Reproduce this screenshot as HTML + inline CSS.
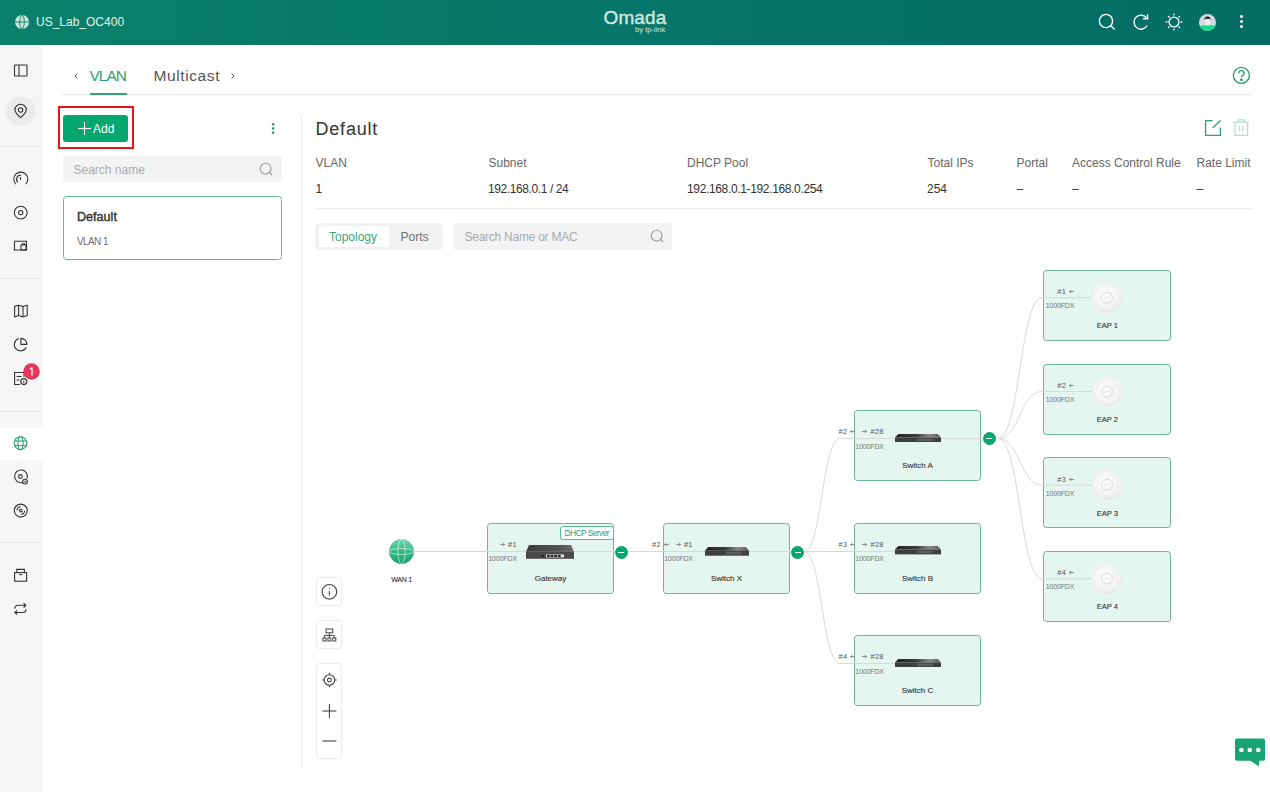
<!DOCTYPE html>
<html><head><meta charset="utf-8">
<style>
*{margin:0;padding:0;box-sizing:border-box}
html,body{width:1270px;height:792px;overflow:hidden;background:#fff;font-family:"Liberation Sans",sans-serif;color:#333}
.a{position:absolute}
.t{position:absolute;white-space:nowrap;line-height:1}
#hdr{left:0;top:0;width:1270px;height:45px;background:linear-gradient(90deg,#0a806b 0%,#077b68 25%,#05736a 60%,#036d64 100%)}
#side{left:0;top:45px;width:42px;height:747px;background:#f6f6f6;box-shadow:1px 0 0 #f9f9f9}
.hr{position:absolute;height:1px;background:#e6e6e6}
.vr{position:absolute;width:1px;background:#e9e9e9}
.box{position:absolute;width:127px;height:71px;border:1px solid #6db49a;border-radius:3.5px;background:#e5f5ef}
.lbl{position:absolute;white-space:nowrap;line-height:1;font-size:8px;color:#222;text-align:center;-webkit-text-stroke:0.1px #222}
.port{position:absolute;white-space:nowrap;line-height:1;font-size:7.4px;color:#666}
.port i{font-style:normal}
.dot{position:absolute;width:13px;height:13px;border-radius:50%;background:#04a76e}
.dot:after{content:"";position:absolute;left:3.5px;top:6px;width:6px;height:1.2px;background:#fff}
.ar{display:inline-block;vertical-align:0px;fill:none;stroke:#666;stroke-width:0.7;position:static!important}
#topo .box{z-index:1}
#topo svg,#topo div{z-index:3}
#topo .box{z-index:1}
#topo svg.lines{z-index:2}
.tb{position:absolute;left:316px;width:26px;background:#fff;border:1px solid #ededed;border-radius:4px;box-shadow:0 0 2px rgba(0,0,0,.04)}
</style></head><body>

<!-- HEADER -->
<div id="hdr" class="a">
  <svg class="a" style="left:15px;top:15px" width="14" height="14" viewBox="0 0 14 14">
    <circle cx="7" cy="7" r="7" fill="#c9e6dc"/>
    <ellipse cx="7" cy="7" rx="2.3" ry="6.8" fill="none" stroke="#0a806b" stroke-width="0.9"/>
    <line x1="0" y1="7" x2="14" y2="7" stroke="#0a806b" stroke-width="0.9"/>
  </svg>
  <div class="t" style="left:36px;top:16px;font-size:12px;color:#e6f3ee">US_Lab_OC400</div>
  <!-- logo -->
  <div class="t" style="left:603.5px;top:8.2px;font-size:19px;color:#cfe7df;letter-spacing:0.1px;-webkit-text-stroke:0.45px #cfe7df">Omada</div>
  <div class="t" style="left:635px;top:26px;font-size:7.6px;color:#d2e9e1">by tp-link</div>
  <!-- search -->
  <svg class="a" style="left:1096px;top:11px" width="22" height="22" viewBox="0 0 22 22" fill="none" stroke="#fff" stroke-width="1.4">
    <circle cx="10" cy="10" r="6.6"/><line x1="14.8" y1="14.8" x2="18.6" y2="18.6"/>
  </svg>
  <!-- refresh -->
  <svg class="a" style="left:1129.5px;top:10.5px" width="22" height="22" viewBox="0 0 22 22" fill="none" stroke="#fff" stroke-width="1.4">
    <path d="M16.8 7.2 A7 7 0 1 0 17.2 14.5"/><path d="M17.6 3.2 L17.6 7.8 L13 7.8" stroke-linejoin="miter"/>
  </svg>
  <!-- sun -->
  <svg class="a" style="left:1163px;top:10.5px" width="22" height="22" viewBox="0 0 22 22" fill="none" stroke="#fff" stroke-width="1.4">
    <circle cx="11" cy="11" r="4.9"/>
    <g stroke-linecap="round" stroke-width="1.5"><line x1="18.20" y1="11.00" x2="18.80" y2="11.00"/><line x1="16.09" y1="16.09" x2="16.52" y2="16.52"/><line x1="11.00" y1="18.20" x2="11.00" y2="18.80"/><line x1="5.91" y1="16.09" x2="5.48" y2="16.52"/><line x1="3.80" y1="11.00" x2="3.20" y2="11.00"/><line x1="5.91" y1="5.91" x2="5.48" y2="5.48"/><line x1="11.00" y1="3.80" x2="11.00" y2="3.20"/><line x1="16.09" y1="5.91" x2="16.52" y2="5.48"/></g>
  </svg>
  <!-- avatar -->
  <svg class="a" style="left:1199px;top:13.5px" width="17" height="17" viewBox="0 0 17 17">
    <defs><clipPath id="av"><circle cx="8.5" cy="8.5" r="8.5"/></clipPath></defs>
    <g clip-path="url(#av)">
      <rect width="17" height="17" fill="#d4dbe0"/>
      <rect x="6.3" y="8" width="4.4" height="6" fill="#efe6e6"/>
      <path d="M0 12.6 Q4 10.4 8.5 11.6 Q13 10.4 17 12.6 L17 17 L0 17Z" fill="#14dc8a"/>
      <ellipse cx="8.5" cy="7.2" rx="2.6" ry="3.2" fill="#f4eeee"/>
      <path d="M5.4 6.8 Q5.2 2.4 8.5 2.6 Q11.8 2.4 11.6 6.8 Q11 4.8 10.2 4.8 Q8.5 5.4 6.8 4.8 Q6 4.8 5.4 6.8Z" fill="#1f2a2a"/>
    </g>
  </svg>
  <!-- kebab -->
  <div class="a" style="left:1239.8px;top:15.3px;width:3px;height:3px;border-radius:50%;background:#fff"></div>
  <div class="a" style="left:1239.8px;top:20.2px;width:3px;height:3px;border-radius:50%;background:#fff"></div>
  <div class="a" style="left:1239.8px;top:25.2px;width:3px;height:3px;border-radius:50%;background:#fff"></div>
</div>

<!-- SIDEBAR -->
<div id="side" class="a"></div>
<div id="sideicons">
<svg class="a" style="left:0;top:45px" width="42" height="747" viewBox="0 45 42 747" fill="none" stroke="#333" stroke-width="1.1">
  <!-- layout -->
  <rect x="14.5" y="65" width="12.5" height="11" rx="0.5"/>
  <line x1="19" y1="65" x2="19" y2="76"/>
  <!-- location bg -->
  <circle cx="20.5" cy="111" r="14.8" fill="#ebebeb" stroke="none"/>
  <path d="M20.6 117.7 C17.3 114.8 14.9 112.4 14.9 110 A5.7 5.7 0 0 1 26.3 110 C26.3 112.4 23.9 114.8 20.6 117.7Z"/>
  <circle cx="20.6" cy="110" r="2.2"/>
  <!-- dashboard gauge -->
  <path d="M15.9 184.1 A7 7 0 1 1 25.7 184.1"/>
  <path d="M17.8 182.3 A4.2 4.2 0 0 1 20.8 175.1"/>
  <line x1="20.5" y1="177" x2="20.5" y2="179.7"/>
  <!-- target -->
  <circle cx="20.7" cy="212.6" r="6.4"/>
  <circle cx="20.7" cy="212.6" r="2.1"/>
  <!-- devices -->
  <path d="M14.5 249.8 L14.5 241.2 L26.5 241.2 L26.5 250 L13.5 250"/>
  <rect x="21" y="245" width="5" height="5"/>
  <path d="M22.4 245 L22.4 243.8 L24.6 243.8 L24.6 245"/>
  <!-- map -->
  <path d="M14.6 306.4 L18.6 305.2 L23 306.6 L27.2 305.2 L27.2 315.6 L23 317 L18.6 315.6 L14.6 317 Z" stroke-linejoin="round"/>
  <line x1="18.6" y1="305.2" x2="18.6" y2="315.6"/><line x1="23" y1="306.6" x2="23" y2="317"/>
  <!-- pie -->
  <path d="M18.9 338.5 A6.3 6.3 0 1 0 26.3 347.3"/>
  <path d="M20.9 338.4 L20.9 344.4 L26.9 344.4 A6 6 0 0 0 20.9 338.4 Z"/>
  <!-- log -->
  <path d="M24 377 L24 372.5 L14.6 372.5 L14.6 384.5 L20 384.5"/>
  <line x1="16.6" y1="376.5" x2="21.5" y2="376.5"/><line x1="16.6" y1="380" x2="19.5" y2="380"/>
  <circle cx="23.8" cy="381.6" r="3"/>
  <line x1="23.8" y1="380.8" x2="23.8" y2="383.2"/>
  <!-- selected bg -->
  <rect x="0" y="428" width="42" height="32" fill="#fff" stroke="none"/>
  <g stroke="#2e9e74">
  <circle cx="20.5" cy="443.2" r="6.4"/>
  <ellipse cx="20.5" cy="443.2" rx="2.6" ry="6.4"/>
  <line x1="14.4" y1="441" x2="26.6" y2="441"/><line x1="14.4" y1="445.6" x2="26.6" y2="445.6"/>
  </g>
  <!-- icon 477 -->
  <path d="M22.4 482.6 A6.4 6.4 0 1 1 27 478.6"/>
  <circle cx="20.4" cy="476.5" r="1.9"/>
  <circle cx="25" cy="481.6" r="2.4"/>
  <path d="M24 480.6 L26 482.6 M26 480.6 L24 482.6" stroke-width="0.8"/>
  <!-- disc 510 -->
  <circle cx="20.8" cy="510.6" r="6.5"/>
  <circle cx="20.8" cy="510.6" r="1.3"/>
  <path d="M17 510.4 A3.8 3.8 0 0 1 20.6 506.8"/><path d="M24.6 510.8 A3.8 3.8 0 0 1 21 514.4"/>
  <!-- box -->
  <rect x="14.6" y="572.6" width="12" height="8.6"/>
  <path d="M16.8 572.6 L16.8 569.4 L24.4 569.4 L24.4 572.6"/>
  <line x1="19.2" y1="574.6" x2="22.2" y2="574.6"/>
  <!-- repeat -->
  <path d="M14.8 608.8 Q14.8 605.3 18.2 605.3 L25.8 605.3 M23.6 603.1 L25.8 605.3 L23.6 607.5"/>
  <path d="M26 609.2 Q26 612.5 22.6 612.5 L14.9 612.5 M17.1 610.3 L14.9 612.5 L17.1 614.7"/>
</svg>
<div class="hr" style="left:0;top:146px;width:42px;background:#e8e8e8"></div>
<div class="hr" style="left:0;top:278px;width:42px;background:#e8e8e8"></div>
<div class="hr" style="left:0;top:411px;width:42px;background:#e8e8e8"></div>
<div class="hr" style="left:0;top:542px;width:42px;background:#e8e8e8"></div>
<svg class="a" style="left:23px;top:363px" width="17" height="17" viewBox="0 0 17 17"><circle cx="8.5" cy="8.5" r="8.3" fill="#e8355d"/><path d="M7 6.2 L9 4.6 L9 12.4" fill="none" stroke="#fff" stroke-width="1.3" stroke-linejoin="round"/></svg>
</div>

<!-- MAIN -->
<div id="main">
<!-- tabs -->
<svg class="a" style="left:72px;top:71px" width="8" height="10" viewBox="0 0 8 10" fill="none" stroke="#555" stroke-width="1"><path d="M5.5 2.5 L3 5 L5.5 7.5"/></svg>
<div class="t" style="left:89.5px;top:67.5px;font-size:15.5px;color:#2e9e74;letter-spacing:-1px">VLAN</div>
<div class="a" style="left:90px;top:93px;width:37px;height:2px;background:#2ea57a"></div>
<div class="t" style="left:153.5px;top:68px;font-size:15.5px;color:#555;letter-spacing:0.6px">Multicast</div>
<svg class="a" style="left:229px;top:71px" width="8" height="10" viewBox="0 0 8 10" fill="none" stroke="#555" stroke-width="1"><path d="M2.5 2.5 L5 5 L2.5 7.5"/></svg>
<div class="hr" style="left:62px;top:94px;width:1190px;background:#e8e8e8"></div>
<div class="a" style="left:90px;top:93px;width:37px;height:2px;background:#2ea57a"></div>
<svg class="a" style="left:1231px;top:65px" width="21" height="21" viewBox="0 0 21 21" fill="none" stroke="#2e9e74" stroke-width="1.4">
  <circle cx="10.4" cy="10.4" r="8"/>
  <path d="M7.8 8.2 A2.6 2.6 0 1 1 11.6 10.5 C10.8 11 10.4 11.6 10.4 12.6"/>
  <circle cx="10.4" cy="14.8" r="0.7" fill="#2e9e74"/>
</svg>

<!-- left panel -->
<div class="a" style="left:58px;top:106px;width:76px;height:43px;border:2px solid #e8141c"></div>
<div class="a" style="left:63px;top:115px;width:65px;height:27px;border-radius:3px;background:#04a76e"></div>
<svg class="a" style="left:78px;top:122px" width="13" height="13" viewBox="0 0 13 13" stroke="#fff" stroke-width="1.2"><line x1="6.5" y1="0" x2="6.5" y2="13"/><line x1="0" y1="6.5" x2="13" y2="6.5"/></svg>
<div class="t" style="left:93px;top:122.7px;font-size:12px;color:#fff">Add</div>
<svg class="a" style="left:268px;top:119px" width="10" height="18" viewBox="0 0 10 18" fill="#2b9270"><circle cx="5.1" cy="5.2" r="1.25"/><circle cx="5.1" cy="9.5" r="1.25"/><circle cx="5.1" cy="13.7" r="1.25"/></svg>

<div class="a" style="left:63px;top:156px;width:219px;height:26px;border-radius:3px;background:#f3f3f3"></div>
<div class="t" style="left:73.5px;top:163.5px;font-size:12px;color:#aaa">Search name</div>
<svg class="a" style="left:259px;top:162px" width="15" height="15" viewBox="0 0 15 15" fill="none" stroke="#999" stroke-width="1.1"><circle cx="6.6" cy="6.6" r="5.4"/><line x1="10.5" y1="10.5" x2="13.2" y2="13.2"/></svg>

<div class="a" style="left:63px;top:196px;width:219px;height:64px;border:1px solid #66b399;border-radius:3.5px;background:#fff"></div>
<div class="t" style="left:77px;top:211.3px;font-size:12.6px;color:#333;-webkit-text-stroke:0.4px #333">Default</div>
<div class="t" style="left:77px;top:236.9px;font-size:10px;color:#707070;letter-spacing:-0.6px">VLAN 1</div>

<div class="vr" style="left:301px;top:115px;height:652px"></div>

<!-- right header -->
<div class="t" style="left:315.5px;top:119.5px;font-size:18px;color:#333;letter-spacing:0.8px">Default</div>
<svg class="a" style="left:1203px;top:118px" width="20" height="20" viewBox="0 0 20 20" fill="none" stroke="#2e9e74" stroke-width="1.3">
  <path d="M9.6 2.6 L2.6 2.6 L2.6 17.4 L17.4 17.4 L17.4 9.6"/><line x1="9.6" y1="10" x2="17.6" y2="2.6"/>
</svg>
<svg class="a" style="left:1231px;top:117px" width="20" height="20" viewBox="0 0 20 20" fill="none" stroke="#b5dccd" stroke-width="1.2">
  <line x1="2" y1="5.2" x2="18" y2="5.2"/><path d="M7.2 5 L7.2 2.8 L13.4 2.8 L13.4 5"/>
  <path d="M4 5.2 L4 18.4 L16.6 18.4 L16.6 5.2"/><line x1="8.6" y1="9" x2="8.6" y2="14"/><line x1="11.8" y1="9" x2="11.8" y2="14"/>
</svg>

<div class="t" style="left:315.5px;top:156.5px;font-size:12px;color:#666">VLAN</div>
<div class="t" style="left:488.5px;top:156.5px;font-size:12px;color:#666">Subnet</div>
<div class="t" style="left:687px;top:156.5px;font-size:12px;color:#666">DHCP Pool</div>
<div class="t" style="left:927.5px;top:156.5px;font-size:12px;color:#666">Total IPs</div>
<div class="t" style="left:1016.5px;top:156.5px;font-size:12px;color:#666">Portal</div>
<div class="t" style="left:1072px;top:156.5px;font-size:12px;color:#666">Access Control Rule</div>
<div class="t" style="left:1196.5px;top:156.5px;font-size:12px;color:#666">Rate Limit</div>

<div class="t" style="left:315.5px;top:182.5px;font-size:12px;color:#333">1</div>
<div class="t" style="left:488px;top:182.5px;font-size:12px;color:#333;letter-spacing:-0.4px">192.168.0.1 / 24</div>
<div class="t" style="left:687px;top:182.5px;font-size:12px;color:#333;letter-spacing:-0.35px">192.168.0.1-192.168.0.254</div>
<div class="t" style="left:927px;top:182.5px;font-size:12px;color:#333">254</div>
<div class="t" style="left:1016.5px;top:182.5px;font-size:12px;color:#333">–</div>
<div class="t" style="left:1072px;top:182.5px;font-size:12px;color:#333">–</div>
<div class="t" style="left:1196.5px;top:182.5px;font-size:12px;color:#333">–</div>
<div class="hr" style="left:315px;top:208px;width:937px;background:#ececec"></div>

<!-- seg tabs -->
<div class="a" style="left:315px;top:223px;width:128px;height:27px;border-radius:4px;background:#f2f2f2"></div>
<div class="a" style="left:319px;top:226px;width:70px;height:21px;border-radius:3px;background:#fff"></div>
<div class="t" style="left:329px;top:230.5px;font-size:12px;color:#3aa67c">Topology</div>
<div class="t" style="left:400.5px;top:230.5px;font-size:12px;color:#707070">Ports</div>
<div class="a" style="left:453px;top:223px;width:219px;height:27px;border-radius:4px;background:#f3f3f3"></div>
<div class="t" style="left:464.5px;top:230.5px;font-size:12px;color:#aaa;letter-spacing:-0.25px">Search Name or MAC</div>
<svg class="a" style="left:650px;top:229px" width="15" height="15" viewBox="0 0 15 15" fill="none" stroke="#999" stroke-width="1.1"><circle cx="6.6" cy="6.6" r="5.4"/><line x1="10.5" y1="10.5" x2="13.2" y2="13.2"/></svg>

<div id="topo">
<svg class="a" style="left:0;top:0" width="1270" height="792" fill="none" stroke="#d9d9d9" stroke-width="1"><line x1="413" y1="551.5" x2="526" y2="551.5"/><line x1="574" y1="551.5" x2="621" y2="551.5"/><line x1="621" y1="551.5" x2="705" y2="551.5"/><line x1="749" y1="551.5" x2="797.5" y2="551.5"/><path d="M804 551.5 C822.0 551.5 822.0 438.5 840 438.5"/><line x1="840" y1="438.5" x2="918" y2="438.5"/><path d="M804 551.5 C822.0 551.5 822.0 551.5 840 551.5"/><line x1="840" y1="551.5" x2="918" y2="551.5"/><path d="M804 551.5 C822.0 551.5 822.0 663.5 840 663.5"/><line x1="840" y1="663.5" x2="918" y2="663.5"/><line x1="941" y1="438.5" x2="989" y2="438.5"/><path d="M998 438.5 C1020.0 438.5 1020.0 297.8 1042 297.8"/><line x1="1042" y1="297.8" x2="1092" y2="297.8"/><path d="M998 438.5 C1020.0 438.5 1020.0 391.5 1042 391.5"/><line x1="1042" y1="391.5" x2="1092" y2="391.5"/><path d="M998 438.5 C1020.0 438.5 1020.0 485.1 1042 485.1"/><line x1="1042" y1="485.1" x2="1092" y2="485.1"/><path d="M998 438.5 C1020.0 438.5 1020.0 578.8 1042 578.8"/><line x1="1042" y1="578.8" x2="1092" y2="578.8"/></svg>
<svg class="a" style="left:388.5px;top:538.5px" width="25" height="25" viewBox="0 0 25 25">
<defs><linearGradient id="wg" x1="0" y1="0" x2="0" y2="1"><stop offset="0" stop-color="#72d3ae"/><stop offset="0.55" stop-color="#2fb583"/><stop offset="1" stop-color="#17a56e"/></linearGradient></defs>
<circle cx="12.5" cy="12.5" r="12.4" fill="url(#wg)"/>
<g fill="none" stroke="#d8f7ea" stroke-width="0.8" opacity="0.85">
<ellipse cx="12.5" cy="12.5" rx="3.6" ry="12.3"/><ellipse cx="12.5" cy="12.5" rx="12.3" ry="3"/>
</g></svg>
<div class="lbl" style="left:361.5px;width:80px;top:575.76px;font-size:7px;color:#333;letter-spacing:-0.25px">WAN 1</div>
<div class="box" style="left:487px;top:523px;width:127px"></div>
<div class="a" style="left:560px;top:526px;width:54px;height:14px;border:1px solid #5cb995;border-radius:3px;background:#fff"></div>
<div class="t" style="left:564.5px;top:528.8px;font-size:8.4px;color:#2f9f76;letter-spacing:-0.55px">DHCP Server</div>
<div class="port" style="right:753.10px;top:541.10px;color:#555;letter-spacing:0.35px"><svg class="ar" width="5" height="5" viewBox="0 0 5 5"><path d="M0 2.5 H4.6 M2.8 0.9 L4.5 2.5 L2.8 4.1"/></svg><i style="display:inline-block;width:3px"></i>#1</div>
<div class="port" style="right:753.10px;top:555.30px;color:#777;font-size:7px;letter-spacing:-0.15px">1000FDX</div>
<div class="lbl" style="left:510.5px;width:80px;top:575.24px;font-size:8px;color:#333">Gateway</div>
<svg class="a" style="left:526px;top:545px" width="48" height="14" viewBox="0 0 48 14">
<defs><linearGradient id="gtop" x1="0" x2="1"><stop offset="0" stop-color="#3c3c3c"/><stop offset="0.7" stop-color="#555"/><stop offset="1" stop-color="#6a6a6a"/></linearGradient></defs>
<path d="M3 0 L45 0 L48 6.8 L0 6.8Z" fill="url(#gtop)"/>
<rect x="0" y="6.6" width="48" height="7.2" fill="#4a4a4a"/>
<rect x="20" y="9.4" width="18" height="3" fill="#ddd"/>
<rect x="21" y="9.9" width="2.8" height="2" fill="#222"/><rect x="24.6" y="9.9" width="2.8" height="2" fill="#222"/><rect x="28.2" y="9.9" width="2.8" height="2" fill="#222"/><rect x="31.8" y="9.9" width="2.8" height="2" fill="#222"/>
<rect x="15" y="10" width="3" height="1.6" fill="#222"/>
</svg>
<div class="dot" style="left:614.5px;top:545.5px"></div>
<div class="box" style="left:663px;top:523px;width:127px"></div>
<div class="port" style="right:577.20px;top:541.10px;color:#555;letter-spacing:0.35px">#2<i style="display:inline-block;width:3px"></i><svg class="ar" width="5" height="5" viewBox="0 0 5 5"><path d="M5 2.5 H0.4 M2.2 0.9 L0.5 2.5 L2.2 4.1"/></svg><i style="display:inline-block;width:7px"></i><svg class="ar" width="5" height="5" viewBox="0 0 5 5"><path d="M0 2.5 H4.6 M2.8 0.9 L4.5 2.5 L2.8 4.1"/></svg><i style="display:inline-block;width:3px"></i>#1</div>
<div class="port" style="right:577.20px;top:555.30px;color:#777;font-size:7px;letter-spacing:-0.15px">1000FDX</div>
<div class="lbl" style="left:686.5px;width:80px;top:575.14px;font-size:8px;color:#333">Switch X</div>
<svg class="a" style="left:705px;top:547.3px" width="44" height="8.7" viewBox="0 0 46 8.5" preserveAspectRatio="none">
<defs><linearGradient id="sx" x1="0" x2="1"><stop offset="0" stop-color="#222"/><stop offset="0.45" stop-color="#3a3a3a"/><stop offset="0.75" stop-color="#8a8a8a"/><stop offset="1" stop-color="#555"/></linearGradient></defs>
<path d="M3.2 0 L42.8 0 L46 3.6 L0 3.6Z" fill="url(#sx)"/>
<rect x="0" y="3.5" width="46" height="5" fill="#3f3f3f"/>
<rect x="22" y="4.6" width="16" height="2.6" fill="#5e5e5e"/>
</svg>
<div class="dot" style="left:791px;top:545.5px"></div>
<div class="box" style="left:854px;top:410px;width:127px"></div>
<div class="port" style="right:386.20px;top:428.30px;color:#555;letter-spacing:0.35px">#2<i style="display:inline-block;width:3px"></i><svg class="ar" width="5" height="5" viewBox="0 0 5 5"><path d="M5 2.5 H0.4 M2.2 0.9 L0.5 2.5 L2.2 4.1"/></svg><i style="display:inline-block;width:7px"></i><svg class="ar" width="5" height="5" viewBox="0 0 5 5"><path d="M0 2.5 H4.6 M2.8 0.9 L4.5 2.5 L2.8 4.1"/></svg><i style="display:inline-block;width:3px"></i>#28</div>
<div class="port" style="right:386.20px;top:442.50px;color:#777;font-size:7px;letter-spacing:-0.15px">1000FDX</div>
<div class="lbl" style="left:877.5px;width:80px;top:462.14px;font-size:8px;color:#333">Switch A</div>
<svg class="a" style="left:895px;top:433.8px" width="46" height="8.4" viewBox="0 0 46 8.5" preserveAspectRatio="none">
<defs><linearGradient id="sA" x1="0" x2="1"><stop offset="0" stop-color="#222"/><stop offset="0.45" stop-color="#3a3a3a"/><stop offset="0.75" stop-color="#8a8a8a"/><stop offset="1" stop-color="#555"/></linearGradient></defs>
<path d="M3.2 0 L42.8 0 L46 3.6 L0 3.6Z" fill="url(#sA)"/>
<rect x="0" y="3.5" width="46" height="5" fill="#3f3f3f"/>
<rect x="22" y="4.6" width="16" height="2.6" fill="#5e5e5e"/>
</svg>
<div class="box" style="left:854px;top:522.5px;width:127px"></div>
<div class="port" style="right:386.20px;top:540.80px;color:#555;letter-spacing:0.35px">#3<i style="display:inline-block;width:3px"></i><svg class="ar" width="5" height="5" viewBox="0 0 5 5"><path d="M5 2.5 H0.4 M2.2 0.9 L0.5 2.5 L2.2 4.1"/></svg><i style="display:inline-block;width:7px"></i><svg class="ar" width="5" height="5" viewBox="0 0 5 5"><path d="M0 2.5 H4.6 M2.8 0.9 L4.5 2.5 L2.8 4.1"/></svg><i style="display:inline-block;width:3px"></i>#28</div>
<div class="port" style="right:386.20px;top:555.00px;color:#777;font-size:7px;letter-spacing:-0.15px">1000FDX</div>
<div class="lbl" style="left:877.5px;width:80px;top:574.64px;font-size:8px;color:#333">Switch B</div>
<svg class="a" style="left:895px;top:546.3px" width="46" height="8.4" viewBox="0 0 46 8.5" preserveAspectRatio="none">
<defs><linearGradient id="sB" x1="0" x2="1"><stop offset="0" stop-color="#222"/><stop offset="0.45" stop-color="#3a3a3a"/><stop offset="0.75" stop-color="#8a8a8a"/><stop offset="1" stop-color="#555"/></linearGradient></defs>
<path d="M3.2 0 L42.8 0 L46 3.6 L0 3.6Z" fill="url(#sB)"/>
<rect x="0" y="3.5" width="46" height="5" fill="#3f3f3f"/>
<rect x="22" y="4.6" width="16" height="2.6" fill="#5e5e5e"/>
</svg>
<div class="box" style="left:854px;top:635px;width:127px"></div>
<div class="port" style="right:386.20px;top:653.30px;color:#555;letter-spacing:0.35px">#4<i style="display:inline-block;width:3px"></i><svg class="ar" width="5" height="5" viewBox="0 0 5 5"><path d="M5 2.5 H0.4 M2.2 0.9 L0.5 2.5 L2.2 4.1"/></svg><i style="display:inline-block;width:7px"></i><svg class="ar" width="5" height="5" viewBox="0 0 5 5"><path d="M0 2.5 H4.6 M2.8 0.9 L4.5 2.5 L2.8 4.1"/></svg><i style="display:inline-block;width:3px"></i>#28</div>
<div class="port" style="right:386.20px;top:667.50px;color:#777;font-size:7px;letter-spacing:-0.15px">1000FDX</div>
<div class="lbl" style="left:877.5px;width:80px;top:687.14px;font-size:8px;color:#333">Switch C</div>
<svg class="a" style="left:895px;top:658.8px" width="46" height="8.4" viewBox="0 0 46 8.5" preserveAspectRatio="none">
<defs><linearGradient id="sC" x1="0" x2="1"><stop offset="0" stop-color="#222"/><stop offset="0.45" stop-color="#3a3a3a"/><stop offset="0.75" stop-color="#8a8a8a"/><stop offset="1" stop-color="#555"/></linearGradient></defs>
<path d="M3.2 0 L42.8 0 L46 3.6 L0 3.6Z" fill="url(#sC)"/>
<rect x="0" y="3.5" width="46" height="5" fill="#3f3f3f"/>
<rect x="22" y="4.6" width="16" height="2.6" fill="#5e5e5e"/>
</svg>
<div class="dot" style="left:982.5px;top:432px"></div>
<div class="box" style="left:1043px;top:270px;width:128px"></div>
<div class="port" style="right:195.80px;top:288.30px;color:#555;letter-spacing:0.35px">#1<i style="display:inline-block;width:3px"></i><svg class="ar" width="5" height="5" viewBox="0 0 5 5"><path d="M5 2.5 H0.4 M2.2 0.9 L0.5 2.5 L2.2 4.1"/></svg></div>
<div class="port" style="right:195.80px;top:302.30px;color:#777;font-size:7px;letter-spacing:-0.15px">1000FDX</div>
<div class="lbl" style="left:1067.3px;width:80px;top:322.35px;font-size:7.5px;color:#333">EAP 1</div>
<svg class="a" style="left:1090px;top:281px" width="34" height="34" viewBox="0 0 34 34">
<defs><radialGradient id="eg0" cx="45%" cy="40%" r="60%"><stop offset="0" stop-color="#fdfdfd"/><stop offset="0.8" stop-color="#f1f1f3"/><stop offset="1" stop-color="#e6e8ea"/></radialGradient></defs>
<circle cx="17" cy="17" r="15.6" fill="#e8f1ee" opacity="0.6"/>
<circle cx="17" cy="17" r="14.6" fill="url(#eg0)"/>
<circle cx="17" cy="16.8" r="5.4" fill="none" stroke="#d2d2d6" stroke-width="0.8"/>
<path d="M14.5 17.2 Q17 15.2 19.5 17.2" fill="none" stroke="#d8d8dc" stroke-width="0.7"/>
<circle cx="17" cy="30" r="0.5" fill="#c8c8cc"/>
</svg>
<div class="box" style="left:1043px;top:363.7px;width:128px"></div>
<div class="port" style="right:195.80px;top:382.00px;color:#555;letter-spacing:0.35px">#2<i style="display:inline-block;width:3px"></i><svg class="ar" width="5" height="5" viewBox="0 0 5 5"><path d="M5 2.5 H0.4 M2.2 0.9 L0.5 2.5 L2.2 4.1"/></svg></div>
<div class="port" style="right:195.80px;top:396.00px;color:#777;font-size:7px;letter-spacing:-0.15px">1000FDX</div>
<div class="lbl" style="left:1067.3px;width:80px;top:416.05px;font-size:7.5px;color:#333">EAP 2</div>
<svg class="a" style="left:1090px;top:374.7px" width="34" height="34" viewBox="0 0 34 34">
<defs><radialGradient id="eg1" cx="45%" cy="40%" r="60%"><stop offset="0" stop-color="#fdfdfd"/><stop offset="0.8" stop-color="#f1f1f3"/><stop offset="1" stop-color="#e6e8ea"/></radialGradient></defs>
<circle cx="17" cy="17" r="15.6" fill="#e8f1ee" opacity="0.6"/>
<circle cx="17" cy="17" r="14.6" fill="url(#eg1)"/>
<circle cx="17" cy="16.8" r="5.4" fill="none" stroke="#d2d2d6" stroke-width="0.8"/>
<path d="M14.5 17.2 Q17 15.2 19.5 17.2" fill="none" stroke="#d8d8dc" stroke-width="0.7"/>
<circle cx="17" cy="30" r="0.5" fill="#c8c8cc"/>
</svg>
<div class="box" style="left:1043px;top:457.3px;width:128px"></div>
<div class="port" style="right:195.80px;top:475.60px;color:#555;letter-spacing:0.35px">#3<i style="display:inline-block;width:3px"></i><svg class="ar" width="5" height="5" viewBox="0 0 5 5"><path d="M5 2.5 H0.4 M2.2 0.9 L0.5 2.5 L2.2 4.1"/></svg></div>
<div class="port" style="right:195.80px;top:489.60px;color:#777;font-size:7px;letter-spacing:-0.15px">1000FDX</div>
<div class="lbl" style="left:1067.3px;width:80px;top:509.65px;font-size:7.5px;color:#333">EAP 3</div>
<svg class="a" style="left:1090px;top:468.3px" width="34" height="34" viewBox="0 0 34 34">
<defs><radialGradient id="eg2" cx="45%" cy="40%" r="60%"><stop offset="0" stop-color="#fdfdfd"/><stop offset="0.8" stop-color="#f1f1f3"/><stop offset="1" stop-color="#e6e8ea"/></radialGradient></defs>
<circle cx="17" cy="17" r="15.6" fill="#e8f1ee" opacity="0.6"/>
<circle cx="17" cy="17" r="14.6" fill="url(#eg2)"/>
<circle cx="17" cy="16.8" r="5.4" fill="none" stroke="#d2d2d6" stroke-width="0.8"/>
<path d="M14.5 17.2 Q17 15.2 19.5 17.2" fill="none" stroke="#d8d8dc" stroke-width="0.7"/>
<circle cx="17" cy="30" r="0.5" fill="#c8c8cc"/>
</svg>
<div class="box" style="left:1043px;top:551px;width:128px"></div>
<div class="port" style="right:195.80px;top:569.30px;color:#555;letter-spacing:0.35px">#4<i style="display:inline-block;width:3px"></i><svg class="ar" width="5" height="5" viewBox="0 0 5 5"><path d="M5 2.5 H0.4 M2.2 0.9 L0.5 2.5 L2.2 4.1"/></svg></div>
<div class="port" style="right:195.80px;top:583.30px;color:#777;font-size:7px;letter-spacing:-0.15px">1000FDX</div>
<div class="lbl" style="left:1067.3px;width:80px;top:603.35px;font-size:7.5px;color:#333">EAP 4</div>
<svg class="a" style="left:1090px;top:562px" width="34" height="34" viewBox="0 0 34 34">
<defs><radialGradient id="eg3" cx="45%" cy="40%" r="60%"><stop offset="0" stop-color="#fdfdfd"/><stop offset="0.8" stop-color="#f1f1f3"/><stop offset="1" stop-color="#e6e8ea"/></radialGradient></defs>
<circle cx="17" cy="17" r="15.6" fill="#e8f1ee" opacity="0.6"/>
<circle cx="17" cy="17" r="14.6" fill="url(#eg3)"/>
<circle cx="17" cy="16.8" r="5.4" fill="none" stroke="#d2d2d6" stroke-width="0.8"/>
<path d="M14.5 17.2 Q17 15.2 19.5 17.2" fill="none" stroke="#d8d8dc" stroke-width="0.7"/>
<circle cx="17" cy="30" r="0.5" fill="#c8c8cc"/>
</svg>
</div>

<!-- toolbar -->
<div class="tb" style="top:577px;height:29px"></div>
<svg class="a" style="left:320px;top:582px" width="19" height="19" viewBox="0 0 19 19" fill="none" stroke="#444" stroke-width="1.1">
  <circle cx="9.4" cy="9.8" r="7.3"/><line x1="9.4" y1="8.7" x2="9.4" y2="13.4"/><circle cx="9.4" cy="6.3" r="0.6" fill="#444" stroke="none"/>
</svg>
<div class="tb" style="top:620px;height:28.5px"></div>
<svg class="a" style="left:320px;top:625px" width="19" height="19" viewBox="0 0 19 19" fill="none" stroke="#444" stroke-width="1">
  <rect x="6" y="4" width="6.8" height="3.8"/><line x1="9.4" y1="7.8" x2="9.4" y2="13"/><path d="M4.5 13 L4.5 10.4 L14.3 10.4 L14.3 13"/>
  <rect x="3" y="13" width="3" height="3"/><rect x="7.9" y="13" width="3" height="3"/><rect x="12.8" y="13" width="3" height="3"/>
</svg>
<div class="tb" style="top:663px;height:96px"></div>
<svg class="a" style="left:320px;top:670px" width="19" height="19" viewBox="0 0 19 19" fill="none" stroke="#444" stroke-width="1.1">
  <circle cx="9.4" cy="10" r="5.3"/><circle cx="9.4" cy="10" r="1.9"/>
  <line x1="9.4" y1="2.8" x2="9.4" y2="4.7"/><line x1="9.4" y1="15.3" x2="9.4" y2="17.2"/><line x1="2.2" y1="10" x2="4.1" y2="10"/><line x1="14.7" y1="10" x2="16.6" y2="10"/>
</svg>
<svg class="a" style="left:320px;top:701px" width="19" height="19" viewBox="0 0 19 19" fill="none" stroke="#444" stroke-width="1.1">
  <line x1="9.4" y1="3" x2="9.4" y2="17"/><line x1="2.4" y1="10" x2="16.4" y2="10"/>
</svg>
<svg class="a" style="left:320px;top:731px" width="19" height="19" viewBox="0 0 19 19" fill="none" stroke="#444" stroke-width="1.1">
  <line x1="2.4" y1="10" x2="16.4" y2="10"/>
</svg>

<!-- chat -->
<svg class="a" style="left:1234px;top:737px" width="32" height="31" viewBox="0 0 32 31">
  <path d="M3 1.4 L29 1.4 Q31 1.4 31 3.4 L31 21.8 Q31 23.8 29 23.8 L25 23.8 L25 29.6 L16.5 23.8 L3 23.8 Q1 23.8 1 21.8 L1 3.4 Q1 1.4 3 1.4Z" fill="#16a572"/>
  <circle cx="7.4" cy="13" r="2.3" fill="#fff"/><circle cx="15.8" cy="13" r="2.3" fill="#fff"/><circle cx="24.3" cy="13" r="2.3" fill="#fff"/>
</svg>
</div>

</body></html>
